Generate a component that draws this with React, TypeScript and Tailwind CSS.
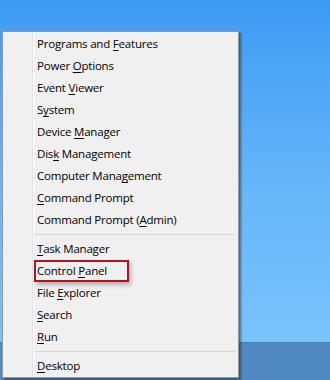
import React from "react";

type Item = { before: string; key: string; after: string };

/* Win+X quick-link menu entries, the underlined letter is the access key */
const groups: Item[][] = [
  [
    { before: "Programs and ", key: "F", after: "eatures" },
    { before: "Power ", key: "O", after: "ptions" },
    { before: "Event ", key: "V", after: "iewer" },
    { before: "S", key: "y", after: "stem" },
    { before: "Device ", key: "M", after: "anager" },
    { before: "Dis", key: "k", after: " Management" },
    { before: "Computer Mana", key: "g", after: "ement" },
    { before: "", key: "C", after: "ommand Prompt" },
    { before: "Command Prompt (", key: "A", after: "dmin)" },
  ],
  [
    { before: "", key: "T", after: "ask Manager" },
    { before: "Control ", key: "P", after: "anel" },
    { before: "File ", key: "E", after: "xplorer" },
    { before: "", key: "S", after: "earch" },
    { before: "", key: "R", after: "un" },
  ],
  [{ before: "", key: "D", after: "esktop" }],
];

function MenuRow({ item, boxed }: { item: Item; boxed?: boolean }) {
  return (
    <div className="flex h-[22px] items-stretch">
      <div
        className={
          "flex items-center border-2 pl-[1px] " +
          (boxed
            ? "w-[95px] border-[#b3141c] shadow-[2px_3px_4px_rgba(0,0,0,0.25)]"
            : "border-transparent")
        }
      >
        <span className="whitespace-pre">
          {item.before}
          <span className="underline underline-offset-[2px]">{item.key}</span>
          {item.after}
        </span>
      </div>
    </div>
  );
}

export default function App() {
  return (
    <div
      className="relative flex h-[380px] w-[330px] flex-col overflow-hidden bg-linear-to-b from-[#3d9af3] via-[#66b6f9] to-[#7ec6fb]"
      style={{ fontFamily: '"Open Sans", "Noto Sans", sans-serif' }}
    >
      <div className="flex-1" />
      {/* taskbar */}
      <div className="h-[38px] border-t border-[#4a7fb6] bg-[#5189c3]" />

      {/* popup menu, overlays the desktop */}
      <div className="absolute left-[2px] top-[31px] flex w-[237px] border border-[#979797] bg-[#f0f0f0] text-[11.5px] tracking-[-0.2px] text-black shadow-[2px_2px_2px_rgba(20,40,70,0.55)]">
        <div className="w-[30px] shrink-0 border-r border-[#e2e3e3]" />
        <div className="flex flex-1 flex-col border-l border-white pt-[1px]">
          {groups.map((g, gi) => (
            <div key={gi} className="flex flex-col">
              {gi > 0 && <div className="my-[3px] mr-[2px] h-px bg-[#d7d7d7]" />}
              {g.map((it) => (
                <MenuRow key={it.before + it.key} item={it} boxed={it.key === "P"} />
              ))}
            </div>
          ))}
        </div>
      </div>
    </div>
  );
}
